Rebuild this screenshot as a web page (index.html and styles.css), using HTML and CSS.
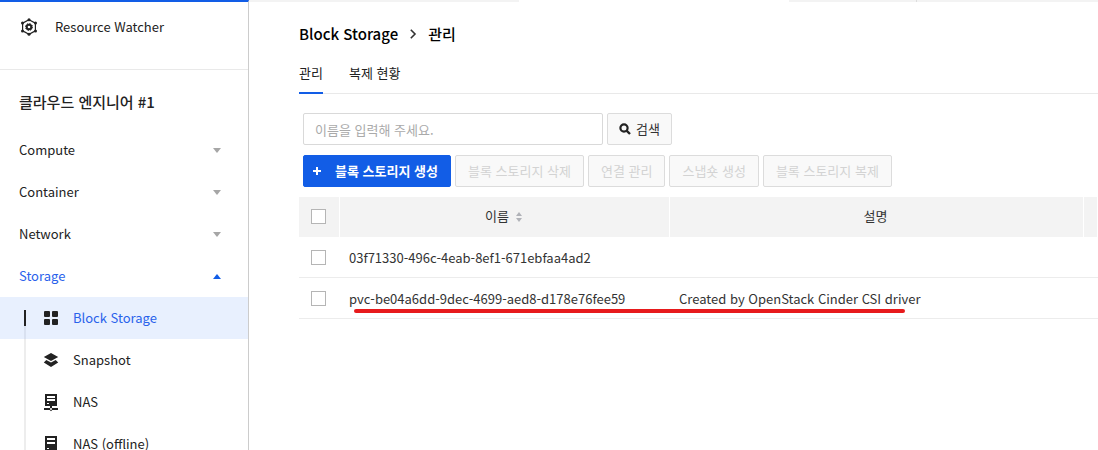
FILE: index.html
```html
<!DOCTYPE html>
<html lang="ko">
<head>
<meta charset="utf-8">
<meta name="viewport" content="width=device-width, initial-scale=1">
<title>Block Storage - 관리</title>
<link rel="stylesheet" href="styles.css">
</head>
<body>
<div class="shell">
  <aside class="sidebar">
    <a class="watcher" href="#watcher">
      <svg class="watcher-icon" viewBox="0 0 18 18" aria-hidden="true">
        <path d="M9 1.8 15.4 5.2V12.8L9 16.2 2.6 12.8V5.2Z" fill="none" stroke="#222" stroke-width="1.2"/>
        <g fill="#222"><circle cx="9" cy="1.8" r="1.5"/><circle cx="15.5" cy="5" r="1.5"/><circle cx="15.5" cy="13" r="1.5"/><circle cx="9" cy="16.2" r="1.5"/><circle cx="2.5" cy="13" r="1.5"/><circle cx="2.5" cy="5" r="1.5"/></g>
        <circle cx="9" cy="9" r="2.3" fill="none" stroke="#222" stroke-width="2"/>
        <circle cx="9" cy="9" r="3.5" fill="none" stroke="#222" stroke-width="1" stroke-dasharray="1.4 1.35"/>
      </svg>
      <span>Resource Watcher</span>
    </a>
    <nav class="nav">
      <h2 class="project">클라우드 엔지니어 #1</h2>
      <a class="group" href="#compute">Compute<svg class="caret" viewBox="0 0 8 5" aria-hidden="true"><path d="M0 0H8L4 5Z"/></svg></a>
      <a class="group" href="#container">Container<svg class="caret" viewBox="0 0 8 5" aria-hidden="true"><path d="M0 0H8L4 5Z"/></svg></a>
      <a class="group" href="#network">Network<svg class="caret" viewBox="0 0 8 5" aria-hidden="true"><path d="M0 0H8L4 5Z"/></svg></a>
      <a class="group open" href="#storage">Storage<svg class="caret" viewBox="0 0 8 5" aria-hidden="true"><path d="M0 5H8L4 0Z"/></svg></a>
      <div class="children">
        <a class="item current" href="#block">
          <svg class="item-icon" viewBox="0 0 14 16" aria-hidden="true"><g fill="#222"><rect x="0" y="1" width="6" height="6" rx="1"/><rect x="8" y="1" width="6" height="6" rx="1"/><rect x="0" y="9" width="6" height="6" rx="1"/><rect x="8" y="9" width="6" height="6" rx="1"/></g></svg>
          Block Storage</a>
        <a class="item" href="#snapshot">
          <svg class="item-icon" viewBox="0 0 14 16" aria-hidden="true"><path d="M7 1 14.2 5 7 9-.2 5ZM2.3 8 7 10.6 11.7 8 14.2 10.4 7 15-.2 10.4Z" fill="#222"/></svg>
          Snapshot</a>
        <a class="item" href="#nas">
          <svg class="item-icon" viewBox="0 0 14 16" aria-hidden="true"><path d="M1 0H13V12H8V14H14V16H0V14H6V12H1Z" fill="#222"/><path d="M3 2H11V4H3ZM3 5H11V7H3ZM3 9H5V10H3Z" fill="#fff"/><path d="M7 12.8 9.2 15 7 17.2 4.8 15Z" fill="#222"/><circle cx="7" cy="15" r="1" fill="#fff"/></svg>
          NAS</a>
        <a class="item" href="#nas-offline">
          <svg class="item-icon" viewBox="0 0 14 16" aria-hidden="true"><path d="M1 0H13V16H1Z" fill="#222"/><path d="M3 2H11V4H3ZM3 6H11V8H3ZM3 12H5V13H3Z" fill="#fff"/></svg>
          NAS (offline)</a>
      </div>
    </nav>
  </aside>
  <main class="main">
    <div class="strip"><span class="strip-left"></span><span class="strip-mid"></span><span class="strip-right"></span></div>
    <div class="content">
      <h1 class="crumbs">Block Storage
        <svg class="crumb-arrow" viewBox="0 0 6 10" aria-hidden="true"><path d="M.8.8 5 5 .8 9.2" fill="none" stroke="#333" stroke-width="1.6"/></svg>
        관리</h1>
      <nav class="tabs">
        <a class="tab selected" href="#manage">관리</a>
        <a class="tab" href="#replication">복제 현황</a>
      </nav>
      <form class="search">
        <input class="search-box" type="text" aria-label="이름" placeholder="이름을 입력해 주세요.">
        <button class="btn search-btn" type="button">
          <svg class="search-icon" viewBox="0 0 12 12" aria-hidden="true"><circle cx="5" cy="5" r="3.6" fill="none" stroke="#222" stroke-width="2.2"/><path d="M7.6 7.6 11 11" stroke="#222" stroke-width="2.4"/></svg>검색</button>
      </form>
      <div class="actions">
        <button class="btn primary" type="button"><svg class="plus" viewBox="0 0 8 8" aria-hidden="true"><path d="M3 0H5V3H8V5H5V8H3V5H0V3H3Z" fill="#fff"/></svg>블록 스토리지 생성</button>
        <button class="btn" type="button" disabled>블록 스토리지 삭제</button>
        <button class="btn" type="button" disabled>연결 관리</button>
        <button class="btn" type="button" disabled>스냅숏 생성</button>
        <button class="btn" type="button" disabled>블록 스토리지 복제</button>
      </div>
      <div class="table-wrap">
        <table class="volumes">
          <colgroup><col class="col-check"><col class="col-name"><col class="col-desc"><col></colgroup>
          <thead>
            <tr>
              <th><input class="check" type="checkbox" aria-label="전체 선택"></th>
              <th>이름<svg class="sort" viewBox="0 0 6 10" aria-hidden="true"><path d="M0 4H6L3 0ZM0 6H6L3 10Z" fill="#b0b2b8"/></svg></th>
              <th>설명</th>
              <th></th>
            </tr>
          </thead>
          <tbody>
            <tr>
              <td class="pick"><input class="check" type="checkbox" aria-label="03f71330-496c-4eab-8ef1-671ebfaa4ad2 선택"></td>
              <td>03f71330-496c-4eab-8ef1-671ebfaa4ad2</td>
              <td></td>
              <td></td>
            </tr>
            <tr>
              <td class="pick"><input class="check" type="checkbox" aria-label="pvc-be04a6dd-9dec-4699-aed8-d178e76fee59 선택"></td>
              <td>pvc-be04a6dd-9dec-4699-aed8-d178e76fee59</td>
              <td>Created by OpenStack Cinder CSI driver</td>
              <td></td>
            </tr>
          </tbody>
        </table>
        <span class="marker"></span>
      </div>
    </div>
  </main>
</div>
</body>
</html>
```
FILE: styles.css
```css
* {
  box-sizing: border-box;
}

body {
  margin: 0;
  background: #fff;
  color: #222;
  font: 13px/20px "Noto Sans CJK KR", "Noto Sans", sans-serif;
}

a {
  color: inherit;
  text-decoration: none;
}

svg {
  flex: none;
  overflow: visible;
}

.shell {
  display: flex;
  height: 100vh;
  overflow: hidden;
}

/* Sidebar */
.sidebar {
  flex: none;
  width: 249px;
  border-top: 2px solid #125de6;
  border-right: 1px solid #ccc;
}

.watcher {
  display: flex;
  align-items: center;
  gap: 17px;
  padding: 15px 20px 32px;
  border-bottom: 1px solid #e9e9e9;
}

.watcher-icon {
  width: 18px;
  height: 20px;
}

.project {
  margin: 0;
  padding: 22px 19px 17px;
  font-size: 15px;
  font-weight: 500;
  line-height: 20px;
}

.group {
  display: flex;
  align-items: center;
  justify-content: space-between;
  height: 42px;
  padding: 0 27px 0 19px;
}

.caret {
  width: 8px;
  height: 5px;
  fill: #a6a6a6;
}

.open {
  color: #2962eb;
}

.open .caret {
  fill: #125de6;
}

.children {
  background: linear-gradient(#ededed, #ededed) 24px 0 / 2px 100% no-repeat;
}

.item {
  display: flex;
  align-items: center;
  gap: 15px;
  height: 42px;
  padding-left: 44px;
}

.item-icon {
  width: 14px;
  height: 16px;
}

.current {
  background:
    linear-gradient(#222, #222) 24px 13px / 2px 16px no-repeat,
    linear-gradient(#d9e1f0, #d9e1f0) 24px 29px / 2px 13px no-repeat,
    #e8f0fe;
  color: #2962eb;
}

/* Main area */
.main {
  flex: 1;
  min-width: 0;
}

.strip {
  display: flex;
  height: 2px;
}

.strip-left {
  width: 270px;
  background: #f3f3f3;
}

.strip-mid {
  width: 270px;
}

.strip-right {
  flex: 1;
  background: linear-gradient(#ddd, #ddd) 127px 0 / 1px 2px no-repeat #f3f3f3;
}

.content {
  padding: 22px 0 0 50px;
}

.crumbs {
  display: flex;
  align-items: center;
  gap: 12px;
  margin: 0;
  color: #000;
  font-size: 15px;
  font-weight: 500;
  line-height: 20px;
}

.crumb-arrow {
  width: 6px;
  height: 10px;
}

.tabs {
  display: flex;
  gap: 26px;
  margin-top: 19px;
  box-shadow: inset 0 -1px #e9e9e9;
}

.tab {
  height: 31px;
}

.selected {
  border-bottom: 2px solid #125de6;
}

.search {
  display: flex;
  gap: 4px;
  padding: 19px 4px 10px;
}

.search-box {
  width: 300px;
  height: 32px;
  padding: 0 11px;
  border: 1px solid #d9d9d9;
  border-radius: 2px;
  font: inherit;
}

.search-box::placeholder {
  color: #aaa;
}

.actions {
  display: flex;
  gap: 4px;
  padding: 0 4px 10px;
}

.btn {
  display: flex;
  align-items: center;
  height: 32px;
  padding: 0 12px;
  border: 1px solid #dcdcdc;
  border-radius: 2px;
  background: #f9f9f9;
  color: #333;
  font: inherit;
  white-space: nowrap;
}

.btn:disabled {
  color: #d3d3d3;
}

.search-btn {
  gap: 5px;
  padding: 0 11px;
}

.search-icon {
  width: 12px;
  height: 12px;
}

.primary {
  gap: 14px;
  padding: 0 12px 0 9px;
  border-color: #125de6;
  background: #125de6;
  color: #fff;
  font-weight: 700;
}

.plus {
  width: 8px;
  height: 8px;
}

/* Volume table */
.table-wrap {
  position: relative;
}

.volumes {
  width: 100%;
  border-collapse: collapse;
  table-layout: fixed;
}

.col-check {
  width: 41px;
}

.col-name {
  width: 330px;
}

.col-desc {
  width: 414px;
}

.volumes th {
  height: 40px;
  padding: 0 3px 2px 0;
  background: linear-gradient(#fff, #fff) right / 1px 100% no-repeat #f3f3f3;
  color: #333;
  font-weight: 400;
}

.volumes td {
  height: 41px;
  padding: 0 9px;
  box-shadow: inset 0 -1px #ececec;
  color: #333;
}

.volumes .pick {
  padding: 0;
}

.check {
  display: block;
  width: 15px;
  height: 15px;
  margin: 0 12px;
  border: 1px solid #b5b5b5;
  background: #fff;
  appearance: none;
}

.check:checked {
  background: #125de6;
}

.sort {
  width: 6px;
  height: 10px;
  margin-left: 7px;
  vertical-align: -1px;
}

/* Hand-drawn highlight under the second row */
.marker {
  position: absolute;
  left: 55px;
  bottom: 6px;
  width: 551px;
  height: 4px;
  border-radius: 2px;
  background: #e71a1c;
}
```
